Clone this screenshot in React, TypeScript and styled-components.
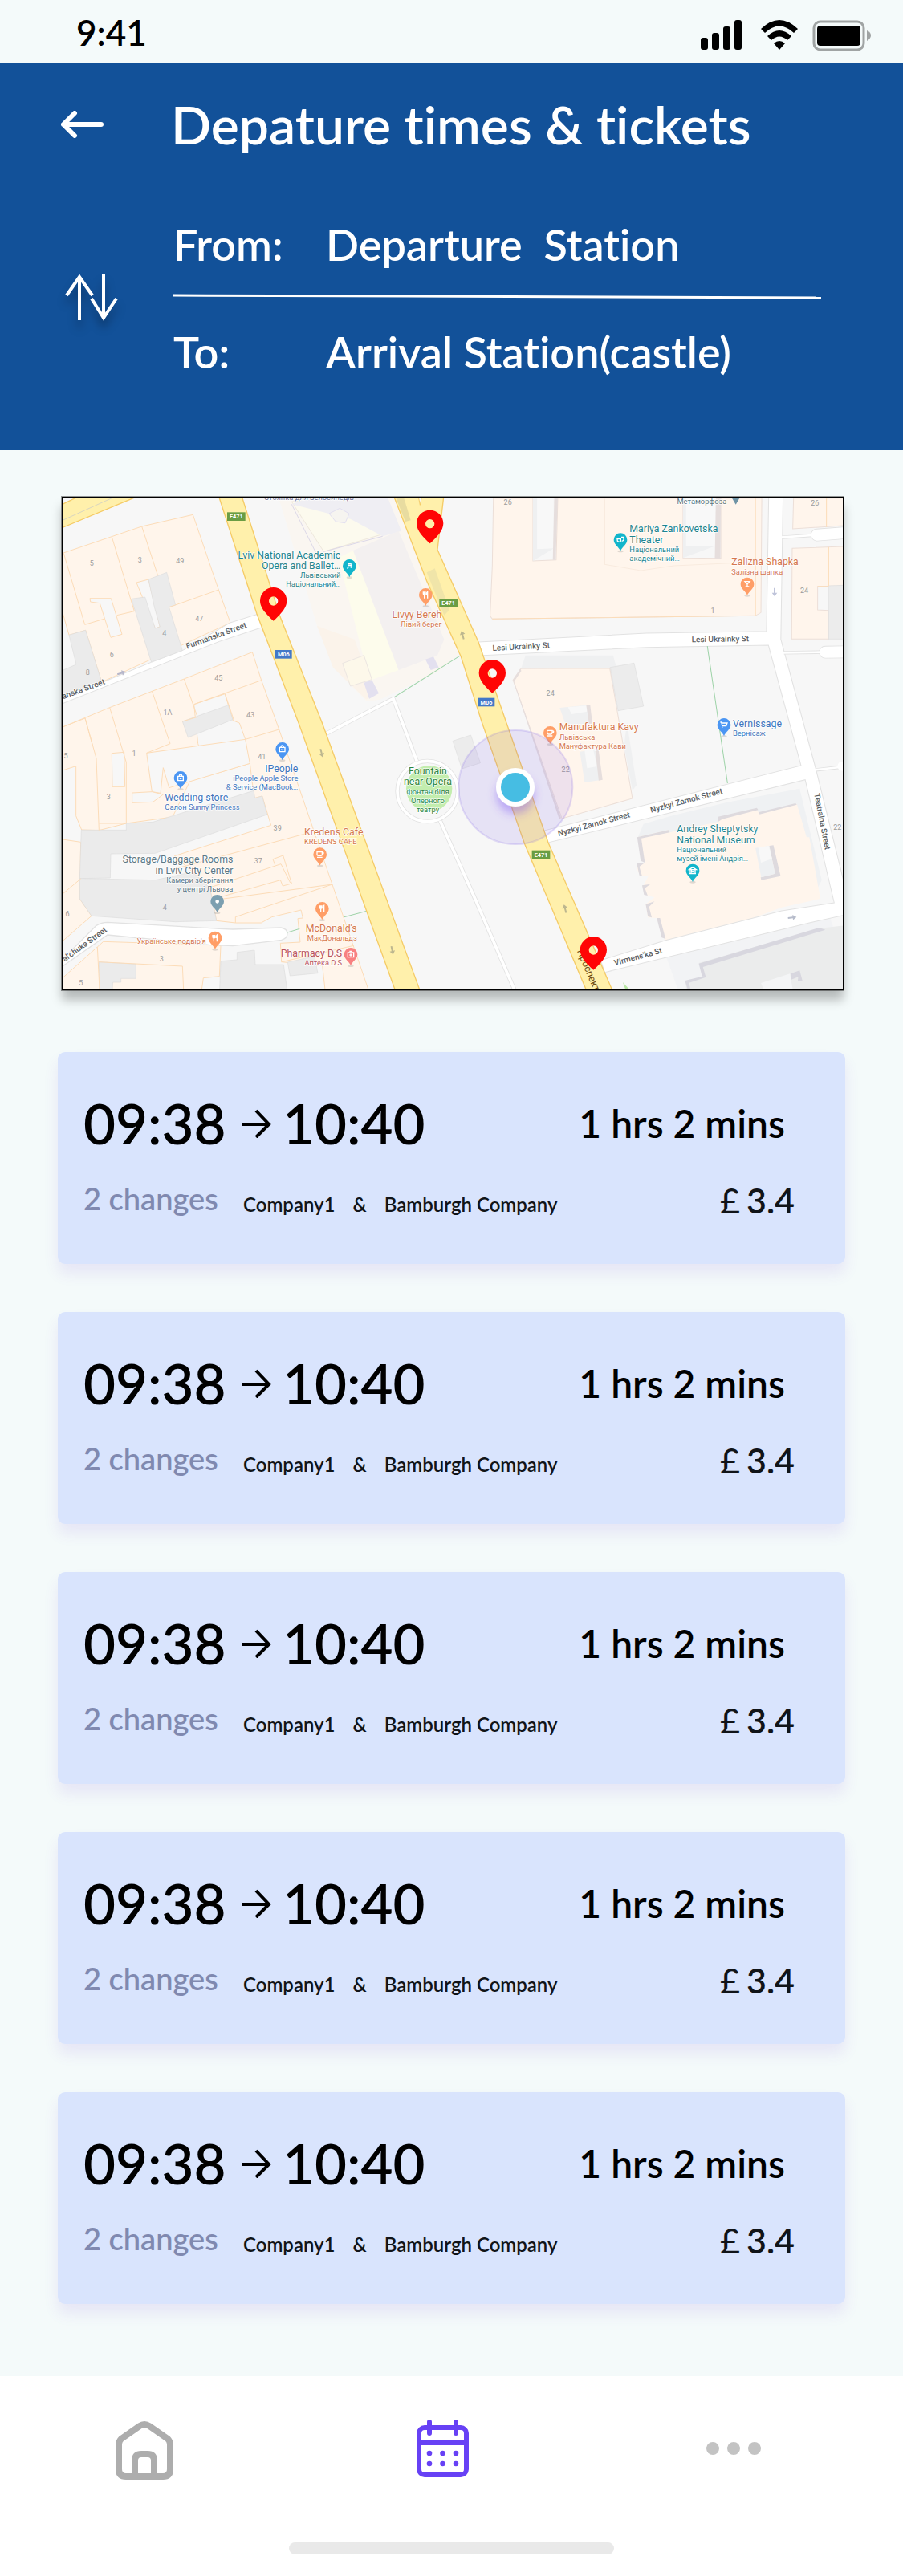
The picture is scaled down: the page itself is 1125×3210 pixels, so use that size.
import React from "react";
import styled, { createGlobalStyle } from "styled-components";

const GlobalStyle = createGlobalStyle`
  *, *::before, *::after { box-sizing: border-box; }
  body {
    margin: 0;
    background: #f4fafa;
    color: #000;
    font-family: Lato, "Open Sans", sans-serif;
    font-weight: 600;
    font-variant-ligatures: none;
  }
  button { border: 0; padding: 0; background: none; color: inherit; font: inherit; cursor: pointer; }
  svg { display: block; }
`;

/* ---------- status bar ---------- */

const StatusBar = styled.div`
  display: flex;
  align-items: center;
  justify-content: space-between;
  height: 78px;
  padding: 2px 40px 0 95px;
`;

const Clock = styled.time`
  font-size: 44px;
  line-height: 76px;
`;

const StatusIcons = styled.div`
  display: flex;
  align-items: center;
  gap: 18px;
  padding-top: 8px;
`;

/* ---------- header ---------- */

const Header = styled.header`
  background: #125199;
  color: #fff;
  padding: 37px 102px 92px 76px;
`;

const HeaderRow = styled.div`
  display: grid;
  grid-template-columns: 140px 1fr;
  align-items: center;
`;

const Title = styled.h1`
  margin: 0 0 0 -3px;
  font-size: 66px;
  line-height: 80px;
  font-weight: 600;
`;

const Route = styled.dl`
  margin: 80px 0 0;
`;

const Stop = styled.div`
  display: grid;
  grid-template-columns: 190px 1fr;
  font-size: 54px;
  line-height: 60px;
  dt, dd { margin: 0; white-space: pre; }
`;

const Divider = styled.svg`
  width: 100%;
  height: 6px;
  margin: 31px 0 37px;
`;

const SwapButton = styled.button`
  justify-self: start;
  margin-top: 78px;
  filter: drop-shadow(0 10px 6px rgba(0, 0, 0, 0.3));
`;

/* ---------- content ---------- */

const Main = styled.main`
  padding: 58px 72px 90px;
`;

const MapFrame = styled.figure`
  margin: 0 2px 0 5px;
  border: 1px solid #000;
  outline: 1px solid rgba(0, 0, 0, 0.4);
  box-shadow: 0 12px 12px rgba(0, 0, 0, 0.26);
  svg { width: 100%; height: auto; }
`;

const JourneyList = styled.ul`
  display: grid;
  gap: 60px;
  margin: 77px 0 0;
  padding: 0;
  list-style: none;
`;

const Card = styled.li`
  padding: 48px 63px 59px 32px;
  border-radius: 9px;
  background: #d9e4fd;
  box-shadow: 0 12px 18px rgba(118, 60, 220, 0.1);
`;

const CardRow = styled.div<{ $align: string }>`
  display: flex;
  align-items: ${(p) => p.$align};
  justify-content: space-between;
  & + & { margin-top: 29px; }
`;

const Group = styled.div`
  display: flex;
  align-items: inherit;
`;

const Times = styled(Group)`
  gap: 14px;
  font-size: 69px;
  line-height: 82px;
  time:first-child { min-width: 184px; }
`;

const Duration = styled.span`
  margin-right: 12px;
  font-size: 48px;
  line-height: 60px;
`;

const Changes = styled.span`
  min-width: 199px;
  color: #8089b0;
  font-size: 38px;
  line-height: 46px;
`;

const Companies = styled(Group)`
  gap: 22px;
  color: #111418;
  font-size: 24px;
  line-height: 30px;
`;

const Price = styled.span`
  display: flex;
  gap: 8px;
  color: #111418;
  font-size: 43px;
  line-height: 40px;
`;

const Currency = styled.span`
  font-weight: 400;
`;

/* ---------- bottom navigation ---------- */

const BottomBar = styled.footer`
  padding: 54px 0 27px;
  background: #fff;
`;

const Nav = styled.nav`
  display: flex;
  justify-content: space-between;
  padding: 0 175px 0 134px;
`;

const NavButton = styled.button<{ $wide?: boolean }>`
  display: flex;
  justify-content: center;
  width: ${(p) => (p.$wide ? 92 : 72)}px;
`;

const HomeIndicator = styled.div`
  width: 36%;
  height: 15px;
  margin: 77px auto 0;
  border-radius: 8px;
  background: #e9e9e9;
`;

/* ---------- map drawing ---------- */

const MapText = styled.text<{ $size?: number; $weight?: number }>`
  font-family: Roboto, "Open Sans", sans-serif;
  font-size: ${(p) => p.$size ?? 37}px;
  font-weight: ${(p) => p.$weight ?? 400};
`;

const HaloText = styled(MapText)`
  paint-order: stroke;
  stroke: rgba(255, 255, 255, 0.85);
  stroke-width: 5px;
  stroke-linejoin: round;
`;

const LEFT_BLOCKS = [
  "54,268 350,168 541,124 637,405 681,528 200,750 140,556 78,574 54,490",
  "54,918 230,845 508,738 763,638 797,743 863,927 1197,1900 1035,1900 1025,1810 872,1796 868,1726 942,1722 933,1634 952,1632 945,1602 836,1628 796,1650 700,1650 629,1642 604,1518 540,1460 472,1400 833,1285 800,1176 770,1184 754,1054 530,1120 465,1254 292,1278 190,1304 125,1302 104,1250 104,1064 54,1080",
  "54,1338 122,1348 118,1560 162,1624 54,1718",
  "54,1856 184,1740 206,1720 645,1734 640,1850 580,1856 574,1900 54,1900",
];

const LEFT_YARDS = [
  "156,437 235,437 276,571 234,583 193,455 158,450",
  "330,378 375,366 418,543 400,549",
  "545,833 661,794 690,893 715,903 737,964 580,1040 560,980",
  "368,1015 737,964 754,1054 452,1145 430,1070 420,1165 388,1160",
  "238,1016 284,1012 287,1141 240,1141",
  "314,1164 388,1160 430,1170 392,1198 314,1201",
];

const GREY_BLOCKS = [
  "78,574 140,556 200,750 54,800 54,706 105,684",
  "311,439 362,432 400,549 418,543 397,470 375,366 443,340 476,462 452,470 502,632 386,676",
  "502,897 673,836 690,890 523,957",
  "292,1278 392,1273 465,1250 768,1156 773,1184 800,1176 818,1245 400,1390 234,1392 232,1482 118,1484 124,1303 292,1303",
  "118,1484 400,1490 538,1460 604,1518 629,1642 475,1646 162,1624 118,1560",
  "190,1796 328,1804 328,1858 272,1858 272,1872 242,1872 240,1900 192,1900",
  "645,1793 706,1788 706,1760 771,1752 774,1806 880,1806 893,1900 641,1900",
  "895,1797 995,1775 1008,1838 904,1848",
];

const LEFT_LINES = [
  "238,207 322,485 257,500", "350,168 410,352", "452,470 637,405", "137,535 208,514", "58,268 137,535",
  "54,918 138,885 180,1035 190,1304", "138,885 167,990", "230,845 292,1050 292,1278", "388,783 456,980 368,1015",
  "508,738 558,880 502,897", "545,833 797,743", "661,794 695,895", "737,964 863,927", "467,1450 975,1313",
  "604,1518 870,1430 905,1500", "620,1560 868,1490 877,1512 910,1503 878,1398 840,1412 848,1434",
  "655,1560 1063,1506", "700,1650 700,1628 1062,1506", "190,1278 292,1278", "872,1796 1142,1735",
  "190,1796 502,1812 506,1900", "184,1740 192,1900", "54,1542 122,1485",
];

const RIGHT_BLOCKS = [
  "217,62 360,62 360,297 444,293 450,62 903,62 903,286 1040,287 1040,62 1188,62 1185,490 1165,502 213,514 205,503 213,315",
  "1303,62 1483,62 1483,165 1300,177",
  "1298,250 1483,243 1483,390 1390,392 1390,480 1430,482 1430,589 1296,589",
  "317,700 638,698 720,1185 465,1260 288,742",
];

const RIGHT_PALE = [
  "360,62 435,62 435,250 360,297", "903,62 1022,62 1022,240 903,286", "333,650 650,650 663,698 317,700",
  "457,846 553,836 572,905 478,908", "530,1010 592,1000 610,1115 547,1125", "700,900 735,1135 720,1155 690,990",
];

const RIGHT_GREY = ["640,695 726,679 760,840 668,857", "1430,390 1483,388 1483,589 1430,589", "70,970 135,948 170,1052 103,1074"];

const MUSEUM = "737,1330 850,1303 855,1312 1030,1272 1045,1255 1170,1223 1178,1242 1315,1205 1350,1330 1360,1330 1400,1560 1260,1592 1135,1640 838,1716 808,1632 776,1630 768,1580 800,1555 768,1545 757,1515 778,1475 748,1475 735,1445 765,1425";

const STOPS = [[842, 447], [1427, 158], [1660, 717], [2038, 1752]];

const POIS: Array<[number, number, string, string]> = [
  [1126, 316, "#12b5cb", "note"], [1411, 424, "#ff9e67", "food"], [875, 1000, "#4b96f3", "bag"], [495, 1108, "#4b96f3", "bag"],
  [1016, 1394, "#ff9e67", "cup"], [632, 1570, "#7c9fb0", "dot"], [1024, 1597, "#ff9e67", "food"], [624, 1707, "#ff9e67", "food"],
  [1131, 1768, "#f88181", "cross"], [2139, 218, "#12b5cb", "mask"], [2613, 384, "#ff9e67", "glass"], [1876, 940, "#ff9e67", "cup"],
  [2526, 910, "#4b96f3", "cart"], [2409, 1455, "#12b5cb", "house"],
];

const GLYPHS: Record<string, React.ReactNode> = {
  note: <path d="M-5 8V-10L8 -7V4M-5 -4L8 -1M-9 8h4M4 5h4" />,
  food: <path d="M-9-12v8q0 4 4 4t4-4v-8M-5-12V13M7 13V-12q-4 3-4 10h4" />,
  bag: <path d="M-10-6H10V10H-10ZM-5-6q0-7 5-7t5 7M-4 1q4 5 8 0" />,
  cup: <path d="M-11-9H8V0q0 5-5 5H-6q-5 0-5-5ZM8-8q6 0 5 4t-5 3M-11 11H9" />,
  dot: <circle r="5" fill="#fff" />,
  cross: <path d="M-11-7H11V10H-11ZM-5-12H5M0-3V7M-5 2H5" />,
  mask: <path d="M-12-3H1V5q-6 6-12 0ZM3-10H12V1q-4 4-7 3" />,
  glass: <path d="M-9-10H9L0 0ZM0 0V9M-7 9H7" />,
  cart: <path d="M-14-10h4L-6 4H8L12-7H-8M-4 9h1M7 9h1" />,
  house: <path d="M-13-4L0-13L13-4ZM-9-4V11M9-4V11M-12 11H12M-4 8V0L0 4L4 0V8" />,
};

type Label = [number, number, string, number?];
const LABEL_SETS: Array<{ fill: string; anchor: "start" | "middle" | "end"; items: Label[] }> = [
  { fill: "#1e8590", anchor: "end", items: [[1093, 287, "Lviv National Academic"], [1093, 328, "Opera and Ballet…"], [1093, 361, "Львівський", 28], [1093, 393, "Національний…", 28]] },
  { fill: "#1e8590", anchor: "start", items: [[2173, 189, "Mariya Zankovetska"], [2173, 230, "Theater"], [2173, 263, "Національний", 28], [2173, 296, "академічний…", 28], [2350, 1312, "Andrey Sheptytsky"], [2350, 1352, "National Museum"], [2350, 1386, "Національний", 28], [2350, 1418, "музей імені Андрія…", 28]] },
  { fill: "#d5784f", anchor: "end", items: [[1471, 510, "Livyy Bereh"], [1471, 543, "Лівий берег", 28], [1154, 1683, "McDonald's"], [1154, 1716, "МакДональдз", 28], [590, 1729, "Українське подвір'я", 28]] },
  { fill: "#d5784f", anchor: "start", items: [[2554, 313, "Zalizna Shapka"], [2554, 347, "Залізна шапка", 28], [1910, 931, "Manufaktura Kavy"], [1910, 965, "Львівська", 28], [1910, 998, "Мануфактура Кави", 28], [957, 1323, "Kredens Cafe"], [957, 1356, "KREDENS CAFE", 28]] },
  { fill: "#3f76bd", anchor: "end", items: [[934, 1085, "IPeople"], [934, 1119, "iPeople Apple Store", 28], [934, 1152, "& Service (MacBook…", 28]] },
  { fill: "#3f76bd", anchor: "start", items: [[436, 1194, "Wedding store"], [436, 1228, "Салон Sunny Princess", 28], [2559, 918, "Vernissage"], [2559, 952, "Вернісаж", 28]] },
  { fill: "#5c7885", anchor: "end", items: [[691, 1426, "Storage/Baggage Rooms"], [691, 1466, "in Lviv City Center"], [691, 1500, "Камери зберігання", 28], [691, 1533, "у центрі Львова", 28], [2536, 84, "Метаморфоза", 28]] },
  { fill: "#b9545c", anchor: "end", items: [[1098, 1776, "Pharmacy D.S"], [1098, 1810, "Аптека D.S", 28]] },
  { fill: "#2e8540", anchor: "middle", items: [[1419, 1095, "Fountain"], [1419, 1135, "near Opera"], [1419, 1170, "Фонтан біля", 28], [1419, 1203, "Оперного", 28], [1419, 1235, "театру", 28]] },
  { fill: "#74789b", anchor: "middle", items: [[975, 68, "Стоянка для велосипедів", 28]] },
];

const NUMBERS: Array<[number, number, string]> = [
  [163, 314, "5"], [343, 303, "3"], [493, 305, "49"], [565, 523, "47"], [434, 577, "4"], [238, 657, "6"], [148, 723, "8"],
  [637, 744, "45"], [447, 872, "1A"], [756, 882, "43"], [66, 1036, "5"], [321, 1026, "1"], [799, 1038, "41"], [226, 1189, "3"],
  [857, 1306, "39"], [785, 1428, "37"], [436, 1602, "4"], [72, 1625, "6"], [424, 1793, "3"], [122, 1883, "5"],
  [1718, 87, "26"], [2866, 89, "26"], [2484, 492, "1"], [2826, 417, "24"], [1877, 800, "24"], [1934, 1087, "22"], [2950, 1303, "22"],
];

const STREETS: Array<[number, number, number, string]> = [
  [520, 626, -20, "Furmanska Street"], [56, 814, -20, "anska Street"], [1661, 633, -3, "Lesi Ukrainky St"], [2405, 601, -1, "Lesi Ukrainky St"],
  [1908, 1326, -15, "Nyzkyi Zamok Street"], [2254, 1238, -15, "Nyzkyi Zamok Street"], [2118, 1810, -15, "Virmens'ka St"],
  [2863, 1168, 79, "Teatralna Street"], [62, 1796, -36, "al'chuka Street"],
];

const SHIELDS: Array<[number, number, string, string]> = [
  [703, 131, "E471", "#6a9d43"], [880, 646, "M06", "#4378c8"], [1496, 455, "E471", "#6a9d43"], [1638, 825, "M06", "#4378c8"], [1842, 1395, "E471", "#6a9d43"],
];

const ARROWS: Array<[number, number, number, string]> = [
  [1022, 1015, 165, "#bdb78f"], [1286, 1753, 168, "#bdb78f"], [1549, 574, -15, "#bdb78f"], [1932, 1597, -15, "#bdb78f"],
  [2715, 414, 180, "#bfc4da"], [2781, 1630, 83, "#b7bccb"], [274, 716, 72, "#b7b7cb"],
];

function CityMap() {
  return (
    <svg viewBox="54 60 2916 1839" role="img" aria-label="Map of the stations on the route">
      <rect x="54" y="60" width="2916" height="1839" fill="#f7f7f7" />

      <g fill="#fff5eb" stroke="#fcdcb8" strokeWidth="3">
        {LEFT_BLOCKS.map((p) => <polygon key={p} points={p} />)}
      </g>
      <g fill="#f7f7f7" stroke="#fcdcb8" strokeWidth="3">
        {LEFT_YARDS.map((p) => <polygon key={p} points={p} />)}
      </g>
      <g fill="#ebebeb" stroke="#dcdcdc" strokeWidth="2">
        {GREY_BLOCKS.map((p) => <polygon key={p} points={p} />)}
      </g>
      <g fill="none" stroke="#fcdcb8" strokeWidth="3">
        {LEFT_LINES.map((p) => <polyline key={p} points={p} />)}
      </g>

      {/* opera house */}
      <g strokeWidth="3">
        <polygon points="862,62 1293,62 1420,372 1543,640 1455,712 1240,815 1190,822 1065,695 1005,540" fill="#faf6f1" />
        <polygon points="910,75 1190,62 1310,180 1240,200 1030,262" fill="#fcfaee" stroke="#eee8dc" />
        <polygon points="970,62 1270,62 1320,185 1250,205 1130,140 910,85" fill="#efeef3" />
        <polygon points="1050,120 1090,100 1125,120 1110,155 1075,150" fill="#f6f4f0" stroke="#e2dff0" />
        <polygon points="1085,285 1140,258 1310,705 1200,745" fill="#fdfcec" />
        <polygon points="1140,258 1310,185 1480,590 1455,650 1310,705" fill="#f3f0f0" />
        <polygon points="1005,540 1145,590 1200,745 1230,780 1190,815 1065,695" fill="#fbf3ea" />
        <polygon points="1100,680 1180,650 1210,740 1130,765" fill="#fdf8ea" stroke="#ece6e2" />
        <polygon points="1180,752 1210,742 1236,792 1200,812" fill="#e3e0ef" />
        <polygon points="1410,665 1440,655 1460,695 1430,705" fill="#e3e0ef" />
        <path d="M1030 262L1250 205M1000 265L910 85" stroke="#dcd8e8" fill="none" />
      </g>

      {/* blocks east of the avenue */}
      <g transform="translate(1440 0) scale(1.033 1)">
        <g fill="#fff5ec" stroke="#ecdfd8" strokeWidth="3">
          {RIGHT_BLOCKS.map((p) => <polygon key={p} points={p} />)}
        </g>
        <g fill="#eff0f1">{RIGHT_PALE.map((p) => <polygon key={p} points={p} />)}</g>
        <g fill="#ececec" stroke="#dedede" strokeWidth="2">{RIGHT_GREY.map((p) => <polygon key={p} points={p} />)}</g>
        <g fill="#f8f8f8">
          <polygon points="375,62 435,62 435,250 375,253" />
          <polygon points="914,62 1022,62 1022,240 914,243" />
          <polygon points="487,844 553,838 556,860 500,870" />
          <polygon points="547,1005 578,1002 592,1065 556,1072" />
        </g>
        <g fill="#e6dedd">
          <polygon points="437,62 450,62 442,293 432,293" />
          <polygon points="1022,62 1040,62 1038,287 1018,287" />
          <polygon points="553,836 567,834 575,905 563,905" />
          <polygon points="585,1000 597,1000 612,1115 598,1118" />
          <polygon points="288,742 314,700 318,708 292,748 462,1258 455,1262" />
        </g>
        <polyline points="620,62 620,310 750,333 870,315 1185,300" fill="none" stroke="#f9ebdf" strokeWidth="3" />
        <polyline points="213,514 1165,502 1165,62" fill="none" stroke="#fcdcb8" strokeWidth="3" />
        <path d="M1422 62V170M1430 245V390M1390 392H1430" fill="none" stroke="#fcdcb8" strokeWidth="3" />

        {/* museum */}
        <polygon points="760,1280 860,1250 1060,1200 1325,1148 1405,1490 1385,1530 740,1330" fill="#eff1f3" />
        <polygon points={MUSEUM} fill="#fff5ec" />
        <g fill="#dedade">
          <polygon points="737,1330 850,1303 855,1312 752,1334 765,1425 750,1418" />
          <polygon points="1030,1253 1170,1220 1175,1228 1045,1262 1030,1272" />
          <polygon points="1178,1236 1310,1203 1315,1208 1180,1244" />
          <polygon points="735,1425 765,1425 745,1440 755,1475 745,1472" />
          <polygon points="755,1510 785,1505 765,1520 775,1548 762,1545" />
          <polygon points="768,1580 800,1570 780,1590 790,1630 776,1626" />
          <polygon points="808,1632 820,1632 840,1710 826,1705" />
          <polygon points="1230,1360 1256,1475 1186,1490 1184,1480 1236,1466 1215,1362" />
        </g>
        <polygon points="1165,1370 1215,1362 1236,1466 1186,1480" fill="#eef0f2" />
        <polygon points="1175,1368 1213,1362 1225,1410 1185,1425" fill="#f8f8f8" />

        {/* south-east block */}
        <polygon points="840,1770 970,1735 1430,1615 1483,1780 1483,1900 885,1900" fill="#f2f3f5" />
        <polygon points="960,1800 1400,1670 1483,1660 1483,1900 915,1900 912,1868 985,1850" fill="#ebecec" />
        <polygon points="1185,1875 1290,1840 1300,1900 1195,1900" fill="#f4f5f6" />
        <g fill="#d8d7df">
          <polygon points="960,1802 1395,1668 1418,1676 975,1815 985,1850 972,1850" />
          <polygon points="910,1866 985,1847 986,1853 925,1874 930,1900 920,1900" />
          <polygon points="1292,1840 1325,1828 1335,1866 1318,1868 1320,1852 1295,1862" />
        </g>
        <polygon points="685,1872 710,1900 695,1900" fill="#b9e6a5" />

        {/* white streets */}
        <g fill="#fff" stroke="#e2e2e2" strokeWidth="3">
          <path d="M163 600L770 567L1205 560L1213 55H1265L1257 590L1385 1080L1495 1540V1619L1360 1650L620 1835L605 1790L840 1715L1260 1605L1450 1575L1345 1115L415 1350L400 1305L1330 1062L1212 612L770 620L180 650Z" />
        </g>
        <g fill="none" stroke="#e2e2e2" strokeWidth="13">
          <path d="M1262 209L1370 201M1268 640L1400 638M1385 1078L1470 1068" />
          <path d="M1388 200L1490 192M1418 638L1490 637" strokeWidth="47" strokeLinecap="round" />
        </g>
        <g fill="none" stroke="#fff" strokeWidth="8">
          <path d="M1256 209L1370 201M1260 640L1400 638M1380 1078L1470 1068" />
          <path d="M1388 200L1490 192M1418 638L1490 637" strokeWidth="42" strokeLinecap="round" />
          <path d="M1480 1064H1490" strokeWidth="36" strokeLinecap="round" />
        </g>
        <path d="M991 615L1064 1128M95 652L-145 808" stroke="#9ed3a8" strokeWidth="3" fill="none" />
      </g>

      {/* paths and the fountain square */}
      <g fill="none" strokeLinejoin="round">
        <path d="M1035 945L1290 812L1378 1045M1465 1268L1600 1570L1745 1905" stroke="#e2e2e2" strokeWidth="16" />
        <circle cx="1418" cy="1158" r="113" stroke="#e2e2e2" strokeWidth="16" />
        <path d="M1035 945L1290 812L1378 1045M1465 1268L1600 1570L1745 1905" stroke="#fff" strokeWidth="11" />
        <circle cx="1418" cy="1158" r="113" stroke="#fff" strokeWidth="11" />
      </g>
      <circle cx="1424" cy="1148" r="86" fill="#c3edae" />

      {/* western streets */}
      <polygon points="50,800 200,752 385,676 500,633 680,528 780,497 800,545 640,598 54,830" fill="#fff" stroke="#e2e2e2" strokeWidth="3" />
      <path d="M40 1800L180 1660Q200 1648 222 1648L400 1658L640 1672L690 1674L870 1668Q894 1672 894 1690T872 1714L690 1736L600 1732L222 1695L54 1812Z" fill="#fff" stroke="#e2e2e2" strokeWidth="4" />
      <path d="M894 1686L940 1672M1107 1628L1190 1606" stroke="#9ed3a8" strokeWidth="3" />

      {/* avenues */}
      <g fill="#fff0ab" stroke="#f5cb66" strokeWidth="4">
        <polygon points="40,92 115,55 335,55 40,178" />
        <polygon points="636,50 780,495 935,900 1300,1910 1392,1910 1023,900 865,500 722,50" />
        <polygon points="1290,50 1415,372 1543,655 1621,900 1781,1355 2015,1910 2112,1910 1869,1350 1712,900 1608,600 1455,255 1479,50" />
      </g>
      <path d="M54 145L238 62" stroke="#d8d5c0" strokeWidth="3" />
      <path d="M1385 62L1390 88L1395 62" fill="#f7f7f7" stroke="#f5cb66" strokeWidth="3" />
      <polygon points="1300,62 1330,62 1355,145 1335,150" fill="#e8dca0" />
      <polygon points="1415,340 1445,325 1500,480 1480,500" fill="#e9dfa8" opacity="0.7" />

      {ARROWS.map(([x, y, r, c]) => (
        <path key={`${x}-${y}`} transform={`translate(${x} ${y}) rotate(${r})`} d="M-3 16V-2H-10L0-16L10-2H3V16Z" fill={c} />
      ))}

      <g fill="#9c9c9c" textAnchor="middle">
        {NUMBERS.map(([x, y, t]) => <MapText key={`${x}-${y}`} x={x} y={y} $size={27}>{t}</MapText>)}
      </g>
      <g fill="#5c5f63">
        {STREETS.map(([x, y, r, t]) => (
          <HaloText key={`${x}-${y}`} transform={`translate(${x} ${y}) rotate(${r})`} $size={30} $weight={500}>{t}</HaloText>
        ))}
      </g>
      <MapText transform="translate(1976 1755) rotate(67)" $size={37} fill="#6b4a12">Проспект</MapText>

      {SHIELDS.map(([x, y, t, c]) => (
        <g key={`${x}-${y}`}>
          <rect x={x - (t.length > 3 ? 34 : 31)} y={y - 16} width={t.length > 3 ? 68 : 62} height="32" fill={c} />
          <MapText x={x} y={y + 8} textAnchor="middle" fill="#fff" $size={22} $weight={700}>{t}</MapText>
        </g>
      ))}

      {LABEL_SETS.map((set) => (
        <g key={set.fill + set.anchor} fill={set.fill} textAnchor={set.anchor}>
          {set.items.map(([x, y, t, s]) => <HaloText key={`${x}-${y}`} x={x} y={y} $size={s}>{t}</HaloText>)}
        </g>
      ))}

      <path d="M2556 62H2584L2570 86Z" fill="#6f94a6" />
      {POIS.map(([x, y, c, icon]) => (
        <g key={`${x}-${y}`} transform={`translate(${x} ${y})`}>
          <ellipse cy="43" rx="11" ry="4" fill="#000" opacity="0.12" />
          <path d="M0 42C-4 28-25 18-25 0A25 25 0 1 1 25 0C25 18 4 28 0 42Z" fill={c} />
          <g fill="none" stroke="#fff" strokeWidth="4">{GLYPHS[icon]}</g>
        </g>
      ))}

      {/* current position */}
      <defs>
        <filter id="glow" x="-50%" y="-50%" width="200%" height="200%">
          <feDropShadow dx="0" dy="28" stdDeviation="16" floodColor="#6a3df5" floodOpacity="0.35" />
        </filter>
      </defs>
      <circle cx="1747" cy="1143" r="213" fill="#643cf0" fillOpacity="0.11" stroke="#7b61e6" strokeOpacity="0.2" strokeWidth="6" />
      <circle cx="1746" cy="1143" r="72" fill="#fff" filter="url(#glow)" />
      <circle cx="1746" cy="1143" r="54" fill="#46bde3" />

      {STOPS.map(([x, y]) => (
        <path
          key={`${x}-${y}`}
          transform={`translate(${x} ${y})`}
          fill="#ff0505"
          fillRule="evenodd"
          d="M0 74C-24 52-50 26-50-1A50 50 0 1 1 50-1C50 26 24 52 0 74ZM0-17A17 17 0 1 0 0 17A17 17 0 1 0 0-17Z"
        />
      ))}
    </svg>
  );
}

/* ---------- page ---------- */

const JOURNEYS = Array.from({ length: 5 }, (_, id) => ({
  id,
  departs: "09:38",
  arrives: "10:40",
  duration: "1 hrs 2 mins",
  changes: "2 changes",
  companies: ["Company1", "Bamburgh Company"],
  price: "3.4",
}));

export default function App() {
  return (
    <>
      <GlobalStyle />
      <StatusBar>
        <Clock>9:41</Clock>
        <StatusIcons>
          <svg width="57" height="38" viewBox="0 0 57 38" aria-hidden="true">
            <rect x="0" y="22" width="9" height="15" rx="3" />
            <rect x="14" y="16" width="9" height="21" rx="3" />
            <rect x="28" y="8" width="9" height="29" rx="3" />
            <rect x="42" y="0" width="9" height="37" rx="3" />
          </svg>
          <svg width="46" height="38" viewBox="0 0 46 38" aria-hidden="true">
            <path d="M0 11Q23-11 46 11L41 16Q23-1 5 16Z" />
            <path d="M8 20Q23 6 38 20L33 25Q23 16 13 25Z" />
            <path d="M16 29Q23 23 30 29L23 37Z" />
          </svg>
          <svg width="73" height="39" viewBox="0 0 73 39" aria-hidden="true">
            <rect x="2" y="2" width="62" height="35" rx="8" fill="none" stroke="#a0a4a4" strokeWidth="3" />
            <rect x="6" y="7" width="54" height="25" rx="4" />
            <path d="M68 13Q73 15 73 19T68 26Z" fill="#a0a4a4" />
          </svg>
        </StatusIcons>
      </StatusBar>

      <Header>
        <HeaderRow>
          <button aria-label="Back">
            <svg width="54" height="34" viewBox="0 0 54 34" fill="none" stroke="#fff" strokeWidth="6" strokeLinecap="round" strokeLinejoin="round">
              <path d="M50 17H3L17 3M3 17L17 31" />
            </svg>
          </button>
          <Title>Depature times &amp; tickets</Title>
        </HeaderRow>
        <HeaderRow>
          <SwapButton aria-label="Swap stations">
            <svg width="76" height="60" viewBox="0 0 76 60" fill="none" stroke="#fff" strokeWidth="4">
              <path d="M23 58V4M7 27L23 4L39 27" />
              <path d="M53 1V56M38 31L53 55L69 31" />
            </svg>
          </SwapButton>
          <Route>
            <Stop><dt>From:</dt><dd>{"Departure  Station"}</dd></Stop>
            <Divider viewBox="0 0 807 6" preserveAspectRatio="none" aria-hidden="true">
              <path d="M0 2L807 5" stroke="#fff" strokeWidth="3" />
            </Divider>
            <Stop><dt>To:</dt><dd>Arrival Station(castle)</dd></Stop>
          </Route>
        </HeaderRow>
      </Header>

      <Main>
        <MapFrame><CityMap /></MapFrame>
        <JourneyList>
          {JOURNEYS.map((j) => (
            <Card key={j.id}>
              <CardRow $align="center">
                <Times>
                  <time>{j.departs}</time>
                  <svg width="36" height="36" viewBox="0 0 36 36" fill="none" stroke="#000" strokeWidth="4" aria-label="to">
                    <path d="M0 19H33M17 2L33 19L17 35" />
                  </svg>
                  <time>{j.arrives}</time>
                </Times>
                <Duration>{j.duration}</Duration>
              </CardRow>
              <CardRow $align="flex-end">
                <Group>
                  <Changes>{j.changes}</Changes>
                  <Companies>
                    <span>{j.companies[0]}</span>
                    <span>&amp;</span>
                    <span>{j.companies[1]}</span>
                  </Companies>
                </Group>
                <Price><Currency>£</Currency>{j.price}</Price>
              </CardRow>
            </Card>
          ))}
        </JourneyList>
      </Main>

      <BottomBar>
        <Nav aria-label="Main">
          <NavButton $wide aria-label="Home">
            <svg width="72" height="76" viewBox="0 0 72 76" fill="none" stroke="#adadad" strokeWidth="8">
              <path d="M4 31Q4 27 7 24L30 8Q36 4 42 8L65 24Q68 27 68 31V62Q68 71 59 71H13Q4 71 4 62Z" />
              <path d="M24 71V51Q24 43 32 43H40Q48 43 48 51V71" />
            </svg>
          </NavButton>
          <NavButton aria-label="Tickets" aria-current="page">
            <svg width="66" height="76" viewBox="0 0 66 76" fill="none" stroke="#6741f5" strokeWidth="6">
              <rect x="3" y="10" width="59" height="59" rx="7" />
              <path d="M3 29H62" />
              <path d="M16 3V17M49 3V17" strokeLinecap="round" />
              <g fill="#6741f5" stroke="none">
                <circle cx="16" cy="42" r="3.300" /><circle cx="32.500" cy="42" r="3.300" /><circle cx="49" cy="42" r="3.300" />
                <circle cx="16" cy="55" r="3.300" /><circle cx="32.500" cy="55" r="3.300" /><circle cx="49" cy="55" r="3.300" />
              </g>
            </svg>
          </NavButton>
          <NavButton aria-label="More">
            <svg width="68" height="76" viewBox="0 0 68 76" fill="#c3c3c3">
              <circle cx="8" cy="36" r="8" /><circle cx="34" cy="36" r="8" /><circle cx="60" cy="36" r="8" />
            </svg>
          </NavButton>
        </Nav>
        <HomeIndicator />
      </BottomBar>
    </>
  );
}
